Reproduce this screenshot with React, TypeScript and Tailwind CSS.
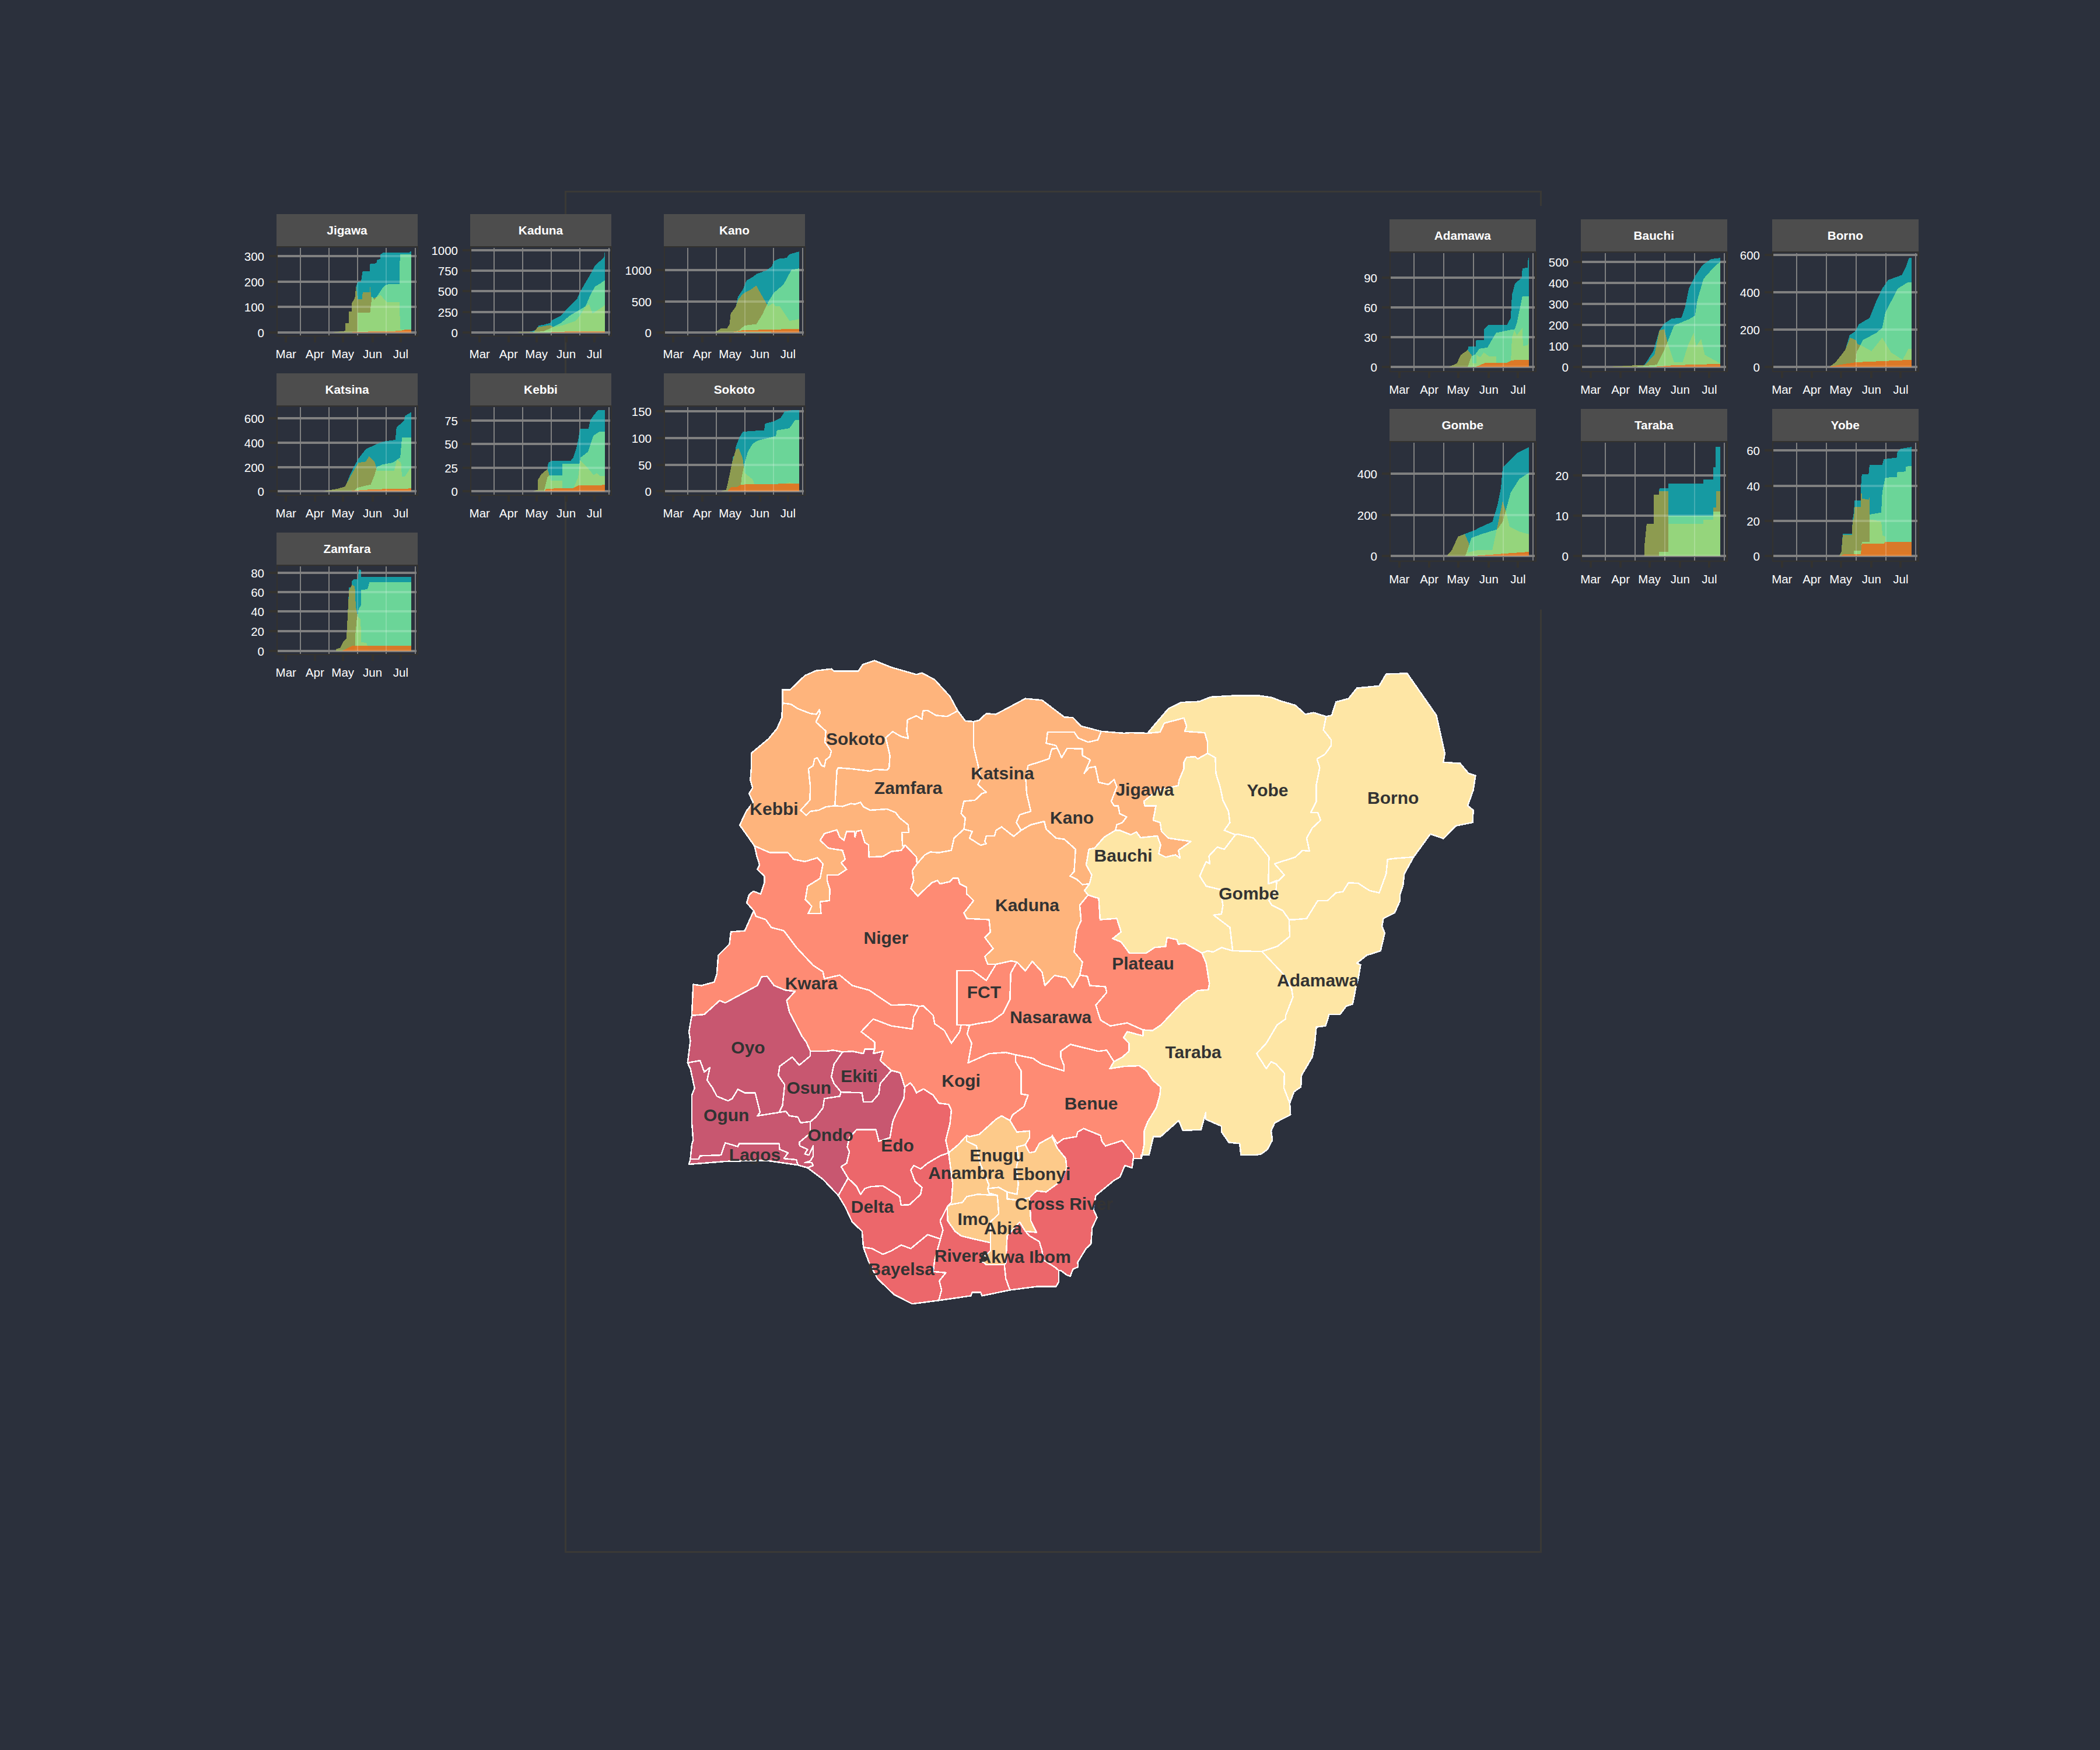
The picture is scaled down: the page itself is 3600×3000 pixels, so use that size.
type Pt = [number, number];

// reads "x,y x,y" taken off a crop of the figure and turns it into page pixels
const crop = (ox: number, oy: number, sx: number, sy: number) => (s: string): Pt[] =>
  s.split(" ").map((p) => {
    const [x, y] = p.split(",").map(Number);
    return [ox + x / sx, oy + y / sy] as Pt;
  });
const A = crop(1150, 1100, 2.09, 2.613);
const B = crop(1850, 1100, 2.09, 2.613);
const C = crop(1150, 1650, 2.09, 2.529);
const D = crop(1750, 1650, 2.412, 2.529);
const rev = (p: Pt[]) => [...p].reverse();

// shared borders
const sokN = A("400,275 400,215 428,215 480,152 520,130 575,122 585,132 672,132 688,102 730,85 790,115 880,147 900,140 945,170 1000,245 1028,310");
const sokZam = A("1028,310 990,335 950,330 920,308 903,310 900,348 880,332 848,350 845,400 851,433 825,425 795,403 770,430 785,510 782,565 775,575 730,572 715,580 650,570 600,565 595,575 588,735");
const sokKeb = A("400,275 430,280 455,300 500,322 522,325 532,305 535,320 520,360 555,400 552,450 575,490 570,515 555,530 550,560 540,555 525,520 515,525 510,555 493,570 500,650 498,710 465,755");
const kebStrip = A("465,755 485,778 500,760 530,755 555,740 588,735");
const kebZam = A("588,735 615,738 645,725 660,728 680,720 690,740 715,755 775,750 805,765 820,790 850,820 853,855 828,855 830,915 840,912");
const kebWest = A("400,275 398,340 380,390 350,435 288,500 288,570 285,620 293,655 280,680 295,720 270,760 247,822 300,915");
const kebNig = A("300,915 355,945 420,945 440,975 480,985 525,968 545,995 535,1060 490,1095 482,1155 505,1185 492,1218 538,1218 535,1165 568,1160 570,1110 560,1070 560,1045 600,1045 630,1020 610,990 625,975 615,935 565,925 535,890 550,860 595,843 605,875 620,890 630,850 658,850 660,875 665,850 682,845 695,900 708,910 710,965 760,962 790,940 825,935 840,912");
const zamNig = A("840,912 880,965 882,995");
const zamKad = A("882,995 910,955 930,942 960,945 1005,935 1015,880 1050,840");
const zamKat = A("1050,840 1055,790 1040,770 1050,715 1090,710 1115,680 1130,675 1100,640 1110,615 1100,550 1085,470 1085,358");
const zamN = A("1028,310 1055,355 1085,358");
const katN = A("1085,358 1105,352 1130,322 1165,325 1270,255 1330,262 1410,338 1440,340 1470,378 1542,402");
const katJig = A("1542,402 1530,440 1495,450 1460,432 1445,405 1350,405 1345,455 1380,465 1385,478");
const katKan = A("1385,478 1365,480 1355,525 1280,555 1272,620 1275,680 1290,760 1250,775 1238,810 1255,845");
const katKad = A("1255,845 1228,872 1185,830 1165,845 1160,870 1130,870 1125,895 1130,905 1110,912 1070,880 1080,850 1050,840");
const kanJig = [...A("1385,478 1400,520 1420,478"), ...B("12,480 12,510 40,530 18,590 35,565 58,560 70,630 105,640 125,618 135,650 115,715 125,735 140,735 145,770 170,785 155,810 135,820 130,845")];
const kanKad = A("1255,845 1290,820 1338,805 1345,840 1380,880 1410,885 1450,930 1445,1030 1430,1050 1455,1065 1475,1088 1500,1085");
const kanBau = B("37,1085 45,1045 25,1000 35,930 55,925 90,875 130,845");
const kadBau = A("1500,1085 1482,1115 1495,1135");
const kadPla = A("1495,1135 1465,1180 1470,1250 1455,1290 1445,1390 1475,1435 1465,1495");
const kadNas = A("1465,1495 1440,1550 1415,1505 1375,1495 1340,1540 1330,1480 1295,1432 1270,1475 1240,1435");
const fctKad = A("1240,1435 1220,1430 1165,1445");
const nigKad = A("1165,1445 1135,1445");
const kadNig = A("1135,1445 1125,1410 1155,1375 1125,1325 1145,1300 1140,1245 1060,1240 1050,1215 1085,1160 1060,1130 1060,1100 1035,1085 1030,1060 1010,1060 1000,1075 965,1085 955,1070 935,1080 905,1115 885,1140 860,1105 870,1070 865,1025 882,995");
const nigWest = A("300,915 308,960 318,1000 310,1020 335,1050 335,1080 322,1130 295,1118 280,1135 272,1170 297,1205");
const nigKwa = [...A("297,1205 305,1230 340,1245 360,1280 405,1295 450,1370 510,1450"), ...C("545,40 550,70 605,55 650,100 710,120 790,185 855,182 890,190")];
const nigKog = C("890,190 905,188 940,230 945,265 980,295 1005,350 1035,300 1040,270");
const nigFct = C("1040,270 1025,270 1025,35 1082,35 1130,78 1165,8");
const fctNas = C("1240,-2 1218,45 1215,160 1190,220 1150,255 1100,265 1070,272");
const fctKog = C("1070,272 1040,270");
const plaNas = D("245,55 275,60 285,100 350,105 355,130 310,185 330,250 370,275 440,262 505,292");
const nasTar = D("505,292 505,318 440,300 425,325 447,350 447,385 420,410 385,430");
const nasBen = [...D("385,430 355,380 320,385 205,355 165,385 165,410 178,445 178,470 85,440 50,415"), ...C("1235,400")];
const nasKog = C("1235,400 1200,390 1140,395 1065,435 1078,350 1062,310 1070,272");
const plaBau = B("32,1135 70,1150 75,1245 135,1240 150,1300 120,1330 150,1345 180,1395 240,1395 270,1370 310,1365 315,1325 350,1335 355,1355 380,1352 440,1395");
const plaTar = [...B("440,1395 455,1440 465,1520"), ...D("780,90 775,118 730,122 670,170 580,270 545,295 505,292")];
const bauJig = B("130,845 145,845 185,865 205,852 220,878 280,870 292,910 285,950 310,965 345,955 362,970 355,935 400,895 320,880 295,850 290,810 265,800 275,735 235,735 232,715 280,665 355,645 358,620 375,570 375,540 385,518 415,515 425,525 460,500");
const bauYob = B("460,500 488,520 490,590 505,650 515,710 535,760 540,810 520,845 560,865");
const bauGom = B("560,865 520,930 495,920 465,960 468,995 455,985 432,1050 455,1095 505,1110 515,1180 510,1220 482,1225 540,1280 550,1385");
const bauTar = B("550,1385 510,1370 480,1390 460,1385 440,1395");
const jigN = B("79,402 160,410 185,408 245,410");
const jigYob = B("245,410 290,405 305,365 375,342 385,380 378,402 450,408 460,450 460,500");
const yobN = B("245,410 275,365 320,300 365,272 430,268 470,248 550,242 645,242 690,250 720,265 775,285 810,325 840,318 885,335");
const yobBor = B("885,335 875,395 903,440 903,465 880,505 852,525 862,565 850,640 850,715 830,765 855,765 865,800 835,835 815,880 825,938 800,935 775,965 700,995 735,1045 715,1070 678,1085");
const yobGom = B("678,1085 680,965 625,880 568,862 560,865");
const gomBor = B("678,1085 708,1070 705,1120 680,1160 690,1180 730,1205 752,1245");
const gomAda = B("752,1245 755,1320 710,1365 655,1388");
const gomTar = B("655,1388 550,1385");
const borN = B("885,335 905,330 920,270 965,255 995,208 1075,198 1100,145 1175,142 1280,330 1310,500 1305,540 1365,545 1395,590 1420,600 1412,665 1392,735 1412,755 1410,810 1350,825 1305,882 1258,862 1198,965");
const borAda = B("1198,965 1140,970 1105,975 1100,1040 1075,1125 1040,1115 1000,1082 965,1080 945,1120 920,1125 890,1160 855,1160 815,1240 770,1245 752,1245");
const adaE = [...B("1198,965 1165,1040 1160,1095 1150,1130 1150,1160 1130,1215 1090,1240 1085,1275 1095,1305 1080,1385 1030,1405 995,1440"), ...D("1405,10 1395,70 1385,110 1372,180 1345,190 1320,225 1275,225 1260,275 1222,280 1215,355 1205,410 1160,490 1158,540 1130,560 1112,610")];
const adaTar = [...D("1112,610 1088,545 1090,480 1055,440 1035,430 1015,460 975,395 1015,350 1060,270 1095,245 1095,230 1125,150 1120,115 1085,50 1040,0"), ...B("655,1388")];
const tarS = D("1112,610 1115,660 1050,695 1035,730 1040,770 1020,810 995,830 970,835 910,835 905,785 860,780 830,735 830,710 765,680 765,650 745,725 670,728 653,685 578,755 548,755 530,835 498,835 498,850");
const tarBen = D("498,850 510,790 510,730 525,690 560,630 575,575 578,540 545,510 520,470 490,448 430,450 368,460 385,430");
const tarCro = D("498,850 465,850");
const benCro = D("465,850 465,830 420,772 350,795 335,775 330,750 260,720 235,735 230,755 175,765 150,785 130,750");
const benEbo = C("1365,755 1320,785 1305,820 1285,825 1270,790");
const benEnu = C("1270,790 1285,760 1285,730 1240,735 1215,685");
const kogBen = C("1235,400 1235,430 1255,470 1255,570 1280,575 1265,625 1225,660 1215,685");
const kwaKog = C("890,190 870,235 865,288 790,275 725,245 682,300 730,345 730,375");
const kogEki = C("730,375 725,395 760,385 750,425 790,468");
const kogOnd = C("790,468 822,478 838,540");
const kogEdo = C("838,540 858,522 870,540 880,565 905,548 940,575 960,610 995,615 1005,640 1000,700 985,770 995,825");
const kogAna = C("995,825 1030,790 1060,750");
const kogEnu = C("1060,750 1070,755 1105,745 1165,680 1185,665 1215,685");
const kwaWest = [...A("297,1205 265,1295 215,1300 210,1355 170,1405 165,1490 155,1525"), ...C("110,100 80,95 75,230")];
const kwaOyo = C("75,230 120,225 175,165 195,175 310,100 325,62 345,60 370,100 410,120 445,125 415,165 425,215 470,320 485,345 500,385");
const kwaOsu = C("500,385 555,385 580,380 615,388");
const kwaEki = C("615,388 650,385 690,395 695,375 720,375 730,375");
const oyoOsu = C("500,385 500,405 460,445 435,410 390,450 385,490 408,530 400,620 388,650");
const oyoOgu = C("388,650 310,665 320,650 302,565 265,565 240,550 220,590 205,600 165,580 150,545 130,510 140,455 120,475 105,425 60,435");
const oyoWest = C("60,435 70,340 65,300 75,230");
const osuEki = C("615,388 585,440 575,495 585,525 610,562");
const osuOnd = C("610,562 605,580 550,590 545,630 520,670 500,690");
const osuOgu = C("500,690 465,695 455,670 425,665 412,645 388,650");
const ekiOnd = C("790,468 750,525 745,570 720,605 690,605 685,565 610,562");
const ondEdo = C("838,540 835,590 805,660 795,690 785,760 745,775 735,725 665,725 640,760 632,800 640,820 630,870 610,885 635,935");
const ondDel = C("635,935 600,1010");
const ondCoast = C("600,1010 545,940 490,890");
const ondOgu = C("490,890 510,880 505,868 480,868 500,860 510,840 510,795 495,835 480,830 490,810 462,795 460,780 500,740 500,690");
const lagN = C("455,878 450,855 405,850 420,825 390,810 388,785 245,785 240,798 195,782 180,835 105,838 100,852 70,852");
const ogWest = C("70,852 75,790 80,770 75,690 75,575 85,545 70,460 60,435");
const edoDel = C("995,825 965,838 920,870 895,895 870,880 860,900 875,950 900,975 895,1005 855,1050 825,1052 820,1015 760,968 715,972 695,980 680,1005 665,970 635,935");
const delAna = C("995,825 1010,960 1005,1040 990,1060");
const delRiv = C("990,1060 965,1120 975,1160");
const delBay = C("975,1160 970,1200 920,1180 890,1210 860,1240 825,1225 790,1250 760,1265 720,1240 690,1235");
const delCoast = C("690,1235 685,1165 650,1125 625,1060 600,1010");
const bayRiv = C("975,1160 945,1290 940,1340 985,1345 962,1380 970,1420 960,1465");
const bayCoast = C("960,1465 865,1480 800,1440 740,1370 710,1300 690,1235");
const rivImo = C("990,1060 992,1120 1018,1165 1040,1185 1090,1200 1145,1215");
const rivAbi = C("1145,1215 1145,1250 1110,1290 1130,1310 1195,1310");
const rivAkw = C("1195,1310 1200,1370 1215,1420");
const rivCoast = C("1215,1420 1115,1445 1110,1430 1080,1430 1075,1445 960,1465");
const imoTop = C("990,1060 1000,1050 1045,1040 1060,1015 1100,1005 1170,1010");
const imoAbi = C("1170,1010 1175,1090 1145,1125 1145,1215");
const anaEnu = C("1060,750 1060,775 1095,795 1108,870 1140,965");
const anaTip = C("1140,965 1135,980");
const abiAna = C("1135,980 1140,1000 1170,1010");
const enuBen = C("1215,685 1240,735 1285,730 1285,760 1270,790 1240,800");
const enuEbo = C("1240,800 1245,850 1238,890 1245,960 1240,1005 1205,995");
const enuAbi = C("1205,995 1175,975 1135,980");
const eboCro = C("1365,755 1385,805 1415,850 1418,890 1400,945 1345,995 1310,990 1285,1020");
const eboAbi = C("1285,1020 1240,1030 1205,1025 1205,995");
const abiCro = C("1285,1020 1290,1120 1310,1170 1270,1165");
const abiAkw = C("1270,1165 1250,1125 1205,1185 1200,1305 1195,1310");
const akwCro = C("1270,1165 1285,1185 1320,1210 1330,1250 1335,1290 1375,1320 1390,1335");
const akwCoast = C("1390,1335 1390,1385 1380,1405 1310,1405 1215,1420");
const croOut = D("165,1335 190,1355 205,1360 215,1330 237,1320 235,1300 270,1240 290,1220 295,1150 315,1105 300,1070 310,1010 385,945 410,930 430,880 460,890 465,850");

const orange = "#feb47c";
const cream = "#fee6a5";
const salmon = "#fe8b74";
const rose = "#c85770";
const coral = "#ec676b";
const peach = "#fdca8a";

const states: { name: string; fill: string; at: Pt; outline: Pt[] }[] = [
  { name: "Sokoto", fill: orange, at: A("662,437")[0], outline: [...sokN, ...sokZam, ...rev(kebStrip), ...rev(sokKeb)] },
  { name: "Kebbi", fill: orange, at: A("370,750")[0], outline: [...sokKeb, ...kebStrip, ...kebZam, ...rev(kebNig), ...rev(kebWest)] },
  { name: "Zamfara", fill: orange, at: A("851,657")[0], outline: [...sokZam, ...kebZam, ...zamNig, ...zamKad, ...zamKat, ...rev(zamN)] },
  { name: "Katsina", fill: orange, at: A("1188,590")[0], outline: [...katN, ...katJig, ...katKan, ...katKad, ...zamKat] },
  { name: "Kano", fill: orange, at: A("1437,788")[0], outline: [...katKan, ...kanKad, ...kanBau, ...rev(kanJig)] },
  { name: "Kaduna", fill: orange, at: A("1277,1182")[0], outline: [...zamKad, ...rev(katKad), ...kanKad, ...kadBau, ...kadPla, ...kadNas, ...fctKad, ...nigKad, ...kadNig] },
  { name: "Jigawa", fill: orange, at: B("235,663")[0], outline: [...jigN, ...jigYob, ...rev(bauJig), ...rev(kanJig), ...rev(katJig)] },
  { name: "Niger", fill: salmon, at: A("771,1328")[0], outline: [...kebNig, ...zamNig, ...rev(kadNig), ...rev(nigKad), ...rev(nigFct), ...rev(nigKog), ...rev(nigKwa), ...rev(nigWest)] },
  { name: "FCT", fill: salmon, at: C("1122,130")[0], outline: [...rev(fctKad), ...fctNas, ...fctKog, ...nigFct] },
  { name: "Nasarawa", fill: salmon, at: C("1361,238")[0], outline: [...rev(kadNas), ...plaNas, ...nasTar, ...nasBen, ...nasKog, ...rev(fctNas)] },
  { name: "Plateau", fill: salmon, at: B("229,1443")[0], outline: [...plaBau, ...plaTar, ...rev(plaNas), ...rev(kadPla)] },
  { name: "Kwara", fill: salmon, at: C("503,90")[0], outline: [...kwaWest, ...kwaOyo, ...kwaOsu, ...kwaEki, ...rev(kwaKog), ...rev(nigKwa)] },
  { name: "Kogi", fill: salmon, at: C("1040,513")[0], outline: [...kwaKog, ...kogEki, ...kogOnd, ...kogEdo, ...kogAna, ...kogEnu, ...rev(kogBen), ...nasKog, ...fctKog, ...rev(nigKog)] },
  { name: "Benue", fill: salmon, at: D("291,612")[0], outline: [...rev(nasBen), ...rev(tarBen), ...tarCro, ...benCro, ...benEbo, ...benEnu, ...rev(kogBen)] },
  { name: "Bauchi", fill: cream, at: B("158,958")[0], outline: [...kanBau, ...bauJig, ...bauYob, ...bauGom, ...bauTar, ...rev(plaBau), ...rev(kadBau)] },
  { name: "Yobe", fill: cream, at: B("675,667")[0], outline: [...yobN, ...yobBor, ...yobGom, ...rev(bauYob), ...rev(jigYob)] },
  { name: "Gombe", fill: cream, at: B("608,1130")[0], outline: [...rev(yobGom), ...gomBor, ...gomAda, ...gomTar, ...rev(bauGom)] },
  { name: "Borno", fill: cream, at: B("1125,700")[0], outline: [...borN, ...borAda, ...rev(gomBor), ...rev(yobBor)] },
  { name: "Adamawa", fill: cream, at: B("855,1517")[0], outline: [...adaE, ...adaTar, ...rev(gomAda), ...rev(borAda)] },
  { name: "Taraba", fill: cream, at: D("713,390")[0], outline: [...rev(adaTar), ...tarS, ...tarBen, ...rev(nasTar), ...rev(plaTar), ...rev(bauTar), ...rev(gomTar)] },
  { name: "Oyo", fill: rose, at: C("277,368")[0], outline: [...kwaOyo, ...oyoOsu, ...oyoOgu, ...oyoWest] },
  { name: "Osun", fill: rose, at: C("495,543")[0], outline: [...kwaOsu, ...osuEki, ...osuOnd, ...osuOgu, ...rev(oyoOsu)] },
  { name: "Ekiti", fill: rose, at: C("675,493")[0], outline: [...kwaEki, ...kogEki, ...ekiOnd, ...rev(osuEki)] },
  { name: "Ondo", fill: rose, at: C("572,748")[0], outline: [...rev(ekiOnd), ...kogOnd, ...ondEdo, ...ondDel, ...ondCoast, ...ondOgu, ...rev(osuOnd)] },
  { name: "Ogun", fill: rose, at: C("199,662")[0], outline: [...rev(oyoOgu), ...rev(osuOgu), ...rev(ondOgu), ...lagN, ...ogWest] },
  { name: "Lagos", fill: rose, at: C("301,835")[0], outline: [...lagN, ...C("70,852 65,875 200,862 340,858 455,878")] },
  { name: "Edo", fill: coral, at: C("812,795")[0], outline: [...kogEdo, ...edoDel, ...rev(ondEdo)] },
  { name: "Delta", fill: coral, at: C("722,1060")[0], outline: [...rev(edoDel), ...delAna, ...delRiv, ...delBay, ...delCoast, ...rev(ondDel)] },
  { name: "Bayelsa", fill: coral, at: C("826,1330")[0], outline: [...rev(delBay), ...bayRiv, ...bayCoast] },
  { name: "Rivers", fill: coral, at: C("1040,1272")[0], outline: [...rivImo, ...rivAbi, ...rivAkw, ...rivCoast, ...rev(bayRiv), ...rev(delRiv)] },
  { name: "Akwa Ibom", fill: coral, at: C("1268,1277")[0], outline: [...rev(abiAkw), ...akwCro, ...akwCoast, ...rev(rivAkw)] },
  { name: "Cross River", fill: coral, at: [1824, 2064], outline: [...eboCro, ...abiCro, ...akwCro, ...croOut, ...benCro] },
  { name: "Anambra", fill: peach, at: C("1058,913")[0], outline: [...kogAna, ...anaEnu, ...anaTip, ...abiAna, ...rev(imoTop), ...rev(delAna)] },
  { name: "Enugu", fill: peach, at: C("1168,837")[0], outline: [...kogEnu, ...enuBen, ...enuEbo, ...enuAbi, ...rev(anaTip), ...rev(anaEnu)] },
  { name: "Ebonyi", fill: peach, at: C("1328,917")[0], outline: [...C("1240,800 1270,790"), ...rev(benEbo), ...eboCro, ...eboAbi, ...rev(enuEbo)] },
  { name: "Imo", fill: peach, at: C("1083,1112")[0], outline: [...imoTop, ...imoAbi, ...rev(rivImo)] },
  { name: "Abia", fill: peach, at: C("1190,1152")[0], outline: [...rev(enuAbi), ...rev(eboAbi), ...abiCro, ...abiAkw, ...rev(rivAbi), ...rev(imoAbi), ...rev(abiAna)] },
];

const toPoints = (p: Pt[]) => p.map(([x, y]) => `${x.toFixed(1)},${y.toFixed(1)}`).join(" ");

type Small = {
  title: string;
  ox: number; // strip left in the crop the series was read from
  oy: number; // panel top in that crop
  sx: number;
  sy: number;
  zero: number;
  ticks: [string, number][];
  teal: string;
  olive: string;
  green: string;
  red?: string;
};

const left: Small[] = [
  {
    title: "Jigawa", ox: 81, oy: 204, sx: 2.376, sy: 2.8, zero: 616,
    ticks: [["300", 249], ["200", 372], ["100", 492], ["0", 616]],
    teal: "305,616 345,610 362,608 362,570 375,570 375,515 388,515 388,475 400,450 405,395 412,372 425,372 432,322 460,322 462,287 488,283 490,268 503,262 505,240 515,232 620,232 630,224 630,616",
    olive: "305,616 345,610 362,608 362,570 375,570 375,515 388,515 388,475 400,450 405,395 412,455 430,455 432,422 460,422 462,395 468,455 490,445 505,435 515,450 530,470 582,470 585,600 630,603 630,616",
    green: "410,612 412,520 462,520 470,440 480,460 500,425 515,398 530,385 582,382 584,240 630,240 630,616",
    red: "345,614 430,612 515,610 585,608 605,602 630,602 630,616",
  },
  {
    title: "Kaduna", ox: 870, oy: 204, sx: 2.376, sy: 2.8, zero: 616,
    ticks: [["1000", 221], ["750", 319], ["500", 417], ["250", 518], ["0", 616]],
    teal: "1020,616 1110,613 1135,605 1145,590 1150,582 1170,578 1195,570 1205,555 1240,535 1270,495 1305,455 1318,420 1340,375 1358,340 1378,295 1415,255 1418,230 1418,616",
    olive: "1020,616 1130,612 1145,590 1195,580 1210,590 1250,580 1300,560 1320,530 1340,490 1355,480 1368,525 1400,500 1418,485 1418,616",
    green: "1110,616 1170,610 1205,590 1240,570 1275,535 1318,505 1340,490 1358,440 1378,395 1400,380 1418,365 1418,616",
    red: "1170,616 1280,610 1418,610 1418,616",
  },
  {
    title: "Kano", ox: 234, oy: 204, sx: 3, sy: 2.8, zero: 616,
    ticks: [["1000", 316], ["500", 467], ["0", 616]],
    teal: "495,616 530,595 560,595 572,575 578,525 605,490 615,445 640,410 660,365 690,350 710,335 760,318 790,298 800,272 830,260 865,258 880,240 930,227 930,616",
    olive: "495,616 530,595 560,595 572,575 578,525 605,490 615,460 640,430 680,410 710,390 730,425 770,490 795,475 810,490 830,490 880,560 910,555 930,550 930,616",
    green: "590,616 620,605 650,582 710,575 740,530 770,470 800,425 850,385 890,315 930,308 930,616",
    red: "590,612 640,605 930,598 930,616",
  },
  {
    title: "Katsina", ox: 81, oy: 968, sx: 2.376, sy: 2.8, zero: 1378,
    ticks: [["600", 1027], ["400", 1145], ["200", 1263], ["0", 1378]],
    teal: "270,1378 330,1365 360,1358 380,1300 395,1262 415,1220 445,1175 490,1150 520,1138 565,1130 570,1070 600,1040 605,1015 630,997 630,1378",
    olive: "270,1378 330,1365 360,1355 385,1300 415,1240 445,1235 458,1208 480,1235 488,1265 490,1280 560,1280 572,1225 588,1240 592,1308 605,1305 625,1268 630,1268 630,1378",
    green: "395,1378 410,1360 465,1345 480,1300 490,1260 515,1248 555,1240 585,1215 592,1120 630,1120 630,1378",
    red: "360,1378 470,1368 630,1364 630,1378",
  },
  {
    title: "Kebbi", ox: 870, oy: 968, sx: 2.376, sy: 2.8, zero: 1378,
    ticks: [["75", 1038], ["50", 1150], ["25", 1265], ["0", 1378]],
    teal: "1125,1378 1145,1370 1145,1325 1160,1295 1185,1280 1188,1240 1200,1232 1280,1230 1290,1215 1305,1160 1318,1078 1352,1076 1360,1035 1375,1010 1390,988 1418,988 1418,1378",
    olive: "1125,1378 1145,1370 1145,1325 1160,1295 1185,1270 1195,1310 1198,1325 1245,1325 1245,1365 1290,1365 1310,1310 1318,1230 1340,1255 1360,1280 1372,1300 1385,1290 1400,1305 1418,1305 1418,1378",
    green: "1170,1378 1185,1310 1190,1302 1245,1302 1245,1245 1315,1245 1320,1215 1350,1188 1372,1110 1395,1092 1418,1092 1418,1378",
    red: "1172,1378 1180,1365 1290,1362 1310,1350 1418,1347 1418,1378",
  },
  {
    title: "Sokoto", ox: 234, oy: 968, sx: 3, sy: 2.8, zero: 1378,
    ticks: [["150", 994], ["100", 1122], ["50", 1251], ["0", 1378]],
    teal: "525,1378 555,1370 565,1330 585,1240 590,1210 600,1205 605,1160 625,1115 640,1092 680,1088 750,1085 755,1052 800,1042 835,1025 855,995 895,988 930,988 930,1378",
    olive: "525,1378 555,1370 565,1330 585,1240 605,1175 620,1172 640,1220 650,1290 690,1320 700,1342 850,1342 880,1335 930,1345 930,1378",
    green: "630,1378 632,1320 650,1240 665,1190 690,1150 715,1135 755,1125 810,1112 815,1085 880,1075 910,1035 930,1035 930,1378",
    red: "560,1378 580,1358 610,1358 630,1345 930,1340 930,1378",
  },
  {
    title: "Zamfara", ox: 102, oy: 235, sx: 3, sy: 3, zero: 675,
    ticks: [["80", 275], ["60", 374], ["40", 473], ["20", 573], ["0", 675]],
    teal: "408,675 410,665 430,660 445,630 462,610 468,490 475,350 488,350 490,315 500,308 520,308 527,255 537,260 537,295 795,295 795,675",
    olive: "408,675 410,665 430,660 445,630 462,610 468,490 475,365 490,335 505,345 510,450 520,500 535,515 537,630 565,635 580,675",
    green: "505,675 508,590 515,510 525,460 537,440 537,362 570,358 580,322 795,322 795,675",
    red: "440,675 470,660 495,648 795,648 795,675",
  },
];

const right: Small[] = [
  {
    title: "Adamawa", ox: 171, oy: 171, sx: 2.376, sy: 2.376, zero: 638,
    ticks: [["90", 275], ["60", 397], ["30", 518], ["0", 638]],
    teal: "415,638 445,625 462,590 490,570 492,555 522,555 524,530 555,530 557,485 575,468 650,468 655,458 665,440 670,345 682,300 710,275 712,238 733,235 736,195 739,195 739,638",
    olive: "415,638 445,625 462,590 490,570 505,590 510,625 525,625 525,590 540,600 555,580 575,595 605,595 607,625 665,625 670,520 680,490 690,510 712,480 715,555 735,550 739,510 739,638",
    green: "490,638 505,595 520,588 537,565 570,560 605,500 665,488 680,488 690,460 712,352 739,352 739,638",
    red: "525,638 560,623 650,622 670,612 739,610 739,638",
  },
  {
    title: "Bauchi", ox: 950, oy: 171, sx: 2.376, sy: 2.376, zero: 638,
    ticks: [["500", 211], ["400", 297], ["300", 382], ["200", 468], ["100", 553], ["0", 638]],
    teal: "1080,638 1180,635 1210,630 1245,575 1270,490 1290,462 1320,442 1360,438 1375,395 1390,320 1415,270 1445,225 1480,200 1518,195 1518,638",
    olive: "1080,638 1180,632 1210,632 1250,590 1270,490 1290,485 1305,545 1330,620 1365,620 1385,555 1410,500 1420,555 1440,525 1455,590 1518,625 1518,638",
    green: "1180,638 1260,630 1290,570 1330,470 1390,445 1415,430 1425,365 1450,280 1490,235 1518,210 1518,638",
    red: "1260,638 1330,632 1518,627 1518,638",
  },
  {
    title: "Borno", ox: 234, oy: 171, sx: 3, sy: 2.376, zero: 638,
    ticks: [["600", 183], ["400", 335], ["200", 487], ["0", 638]],
    teal: "530,638 560,620 610,570 632,510 660,495 680,465 735,440 770,370 800,320 830,285 900,265 920,235 938,195 950,195 950,638",
    olive: "530,638 560,620 610,570 635,520 665,530 672,545 700,555 745,575 800,520 845,580 905,610 935,565 950,565 950,638",
    green: "660,638 668,580 700,530 770,500 800,480 815,420 860,350 880,320 930,295 950,295 950,638",
    red: "530,638 600,628 665,620 950,610 950,638",
  },
  {
    title: "Gombe", ox: 171, oy: 943, sx: 2.376, sy: 2.376, zero: 1408,
    ticks: [["400", 1074], ["200", 1243], ["0", 1408]],
    teal: "405,1408 425,1385 450,1330 475,1320 515,1305 545,1290 590,1270 610,1205 625,1130 632,1050 655,1025 690,990 739,965 739,1408",
    olive: "405,1408 425,1385 450,1330 478,1320 495,1360 490,1395 530,1385 590,1385 610,1290 632,1185 645,1225 660,1290 700,1310 739,1320 739,1408",
    green: "480,1408 505,1335 545,1320 610,1300 632,1270 665,1150 700,1095 739,1070 739,1408",
    red: "525,1408 630,1400 739,1392 739,1408",
  },
  {
    title: "Taraba", ox: 950, oy: 943, sx: 2.376, sy: 2.376, zero: 1408,
    ticks: [["20", 1081], ["10", 1245], ["0", 1408]],
    teal: "1208,1408 1210,1360 1218,1278 1247,1278 1247,1160 1268,1160 1270,1132 1307,1132 1307,1115 1448,1115 1448,1098 1490,1098 1490,1048 1498,1048 1498,965 1518,965 1518,1408",
    olive: "1208,1408 1210,1360 1218,1278 1247,1278 1247,1160 1268,1160 1268,1145 1307,1145 1307,1278 1448,1278 1448,1262 1490,1262 1490,1212 1500,1212 1500,1145 1518,1145 1518,1408",
    green: "1268,1408 1268,1392 1307,1392 1307,1245 1490,1245 1490,1228 1518,1228 1518,1408",
  },
  {
    title: "Yobe", ox: 234, oy: 943, sx: 3, sy: 2.376, zero: 1408,
    ticks: [["60", 978], ["40", 1123], ["20", 1266], ["0", 1408]],
    teal: "580,1408 590,1390 597,1318 645,1318 647,1265 655,1225 657,1182 690,1182 692,1090 697,1075 730,1075 735,1037 800,1037 808,1015 875,1008 878,985 895,972 950,965 950,1408",
    olive: "580,1408 590,1390 597,1322 645,1322 647,1270 655,1250 657,1210 690,1210 692,1135 697,1175 730,1180 735,1168 735,1260 795,1268 802,1325 815,1330 815,1385 950,1395 950,1408",
    green: "655,1408 655,1388 692,1388 695,1352 735,1352 735,1240 795,1232 800,1150 815,1090 875,1087 877,1068 920,1065 922,1045 950,1042 950,1408",
    red: "590,1408 600,1402 690,1402 695,1360 810,1358 815,1352 950,1352 950,1408",
  },
];

const gridAt = [0.169, 0.37, 0.576, 0.778, 0.983];
const months: [string, number][] = [["Mar", 0.067], ["Apr", 0.272], ["May", 0.47], ["Jun", 0.68], ["Jul", 0.88]];

function Panel({ s, w, h }: { s: Small; w: number; h: number }) {
  const lx = (x: number) => (x - s.ox) / s.sx;
  const ly = (y: number) => (y - s.oy) / s.sy;
  const area = (str: string) =>
    str.split(" ").map((p) => {
      const [x, y] = p.split(",").map(Number);
      return `${lx(x).toFixed(1)},${ly(y).toFixed(1)}`;
    }).join(" ");
  const clipId = `area-${s.title}`;
  const gridLines = (
    <>
      {gridAt.map((f) => (
        <line key={f} x1={f * w} x2={f * w} y1={2} y2={h - 1} strokeWidth={2} />
      ))}
      {s.ticks.map(([t, y]) => (
        <line key={t} x1={2} x2={w - 2} y1={ly(y)} y2={ly(y)} strokeWidth={4} />
      ))}
    </>
  );
  return (
    <div className="flex flex-col">
      <div className="flex h-[56px] items-center justify-center bg-[#4d4d4d] text-[20.8px] font-bold text-white">
        {s.title}
      </div>
      <svg width={w} height={h + 64} className="block overflow-visible">
        <g shapeRendering="crispEdges">
          <rect x={1} y={0} width={w - 1} height={h} fill="#2b303c" stroke="#33322f" strokeWidth={2.5} />
          {months.map(([m, f]) => (
            <line key={m} x1={f * w} x2={f * w} y1={h + 1} y2={h + 11} stroke="#33322f" strokeWidth={4} />
          ))}
          {s.ticks.map(([t, y]) => (
            <line key={t} x1={-13} x2={0} y1={ly(y)} y2={ly(y)} stroke="#33322f" strokeWidth={4} />
          ))}
          <g stroke="#808080">{gridLines}</g>
          <polygon points={area(s.teal)} fill="#169aa2" />
          <polygon points={area(s.olive)} fill="#8d9b50" />
          <polygon points={area(s.green)} fill="#99f593" fillOpacity={0.65} />
          {s.red && <polygon points={area(s.red)} fill="#e2711f" fillOpacity={0.92} />}
          <clipPath id={clipId}>
            <polygon points={area(s.teal)} />
          </clipPath>
          <g stroke="#ffffff" strokeOpacity={0.2} clipPath={`url(#${clipId})`}>{gridLines}</g>
        </g>
        {s.ticks.map(([t, y]) => (
          <text key={t} x={-21} y={ly(y) + 8} textAnchor="end" className="fill-white text-[20.5px]">
            {t}
          </text>
        ))}
        {months.map(([m, f]) => (
          <text key={m} x={f * w} y={h + 38} textAnchor="middle" className="fill-white text-[20.5px]">
            {m}
          </text>
        ))}
      </svg>
    </div>
  );
}

export default function App() {
  return (
    <div className="relative h-[3000px] w-[3600px] overflow-hidden bg-[#2b303c] font-['Liberation_Sans',Arial,sans-serif]">
      <div className="absolute left-[968px] top-[327px] h-[2335px] w-[1675px] border-[3px] border-[#3a3936]" />
      <svg width={3600} height={3000} className="absolute left-0 top-0 block">
        {states.map((st) => (
          <polygon
            key={st.name}
            points={toPoints(st.outline)}
            fill={st.fill}
            stroke="#ffffff"
            strokeWidth={2.5}
            strokeLinejoin="round"
            shapeRendering="crispEdges"
          />
        ))}
        {states.map((st) => (
          <text
            key={st.name}
            x={st.at[0]}
            y={st.at[1] + 10}
            textAnchor="middle"
            className="fill-[#333333] text-[30px] font-bold"
          >
            {st.name}
          </text>
        ))}
      </svg>
      <div className="absolute left-[474px] top-[367px] grid grid-cols-[repeat(3,242px)] gap-x-[90px]">
        {left.map((s) => (
          <Panel key={s.title} s={s} w={242} h={153} />
        ))}
      </div>
      <div className="absolute left-[2330px] top-[353px] grid grid-cols-[repeat(3,250.5px)] gap-x-[77.5px] bg-[#2b303c] pb-[19px] pl-[52px] pr-[31px] pt-[23px]">
        {right.map((s) => (
          <Panel key={s.title} s={s} w={250.5} h={205} />
        ))}
      </div>
    </div>
  );
}
